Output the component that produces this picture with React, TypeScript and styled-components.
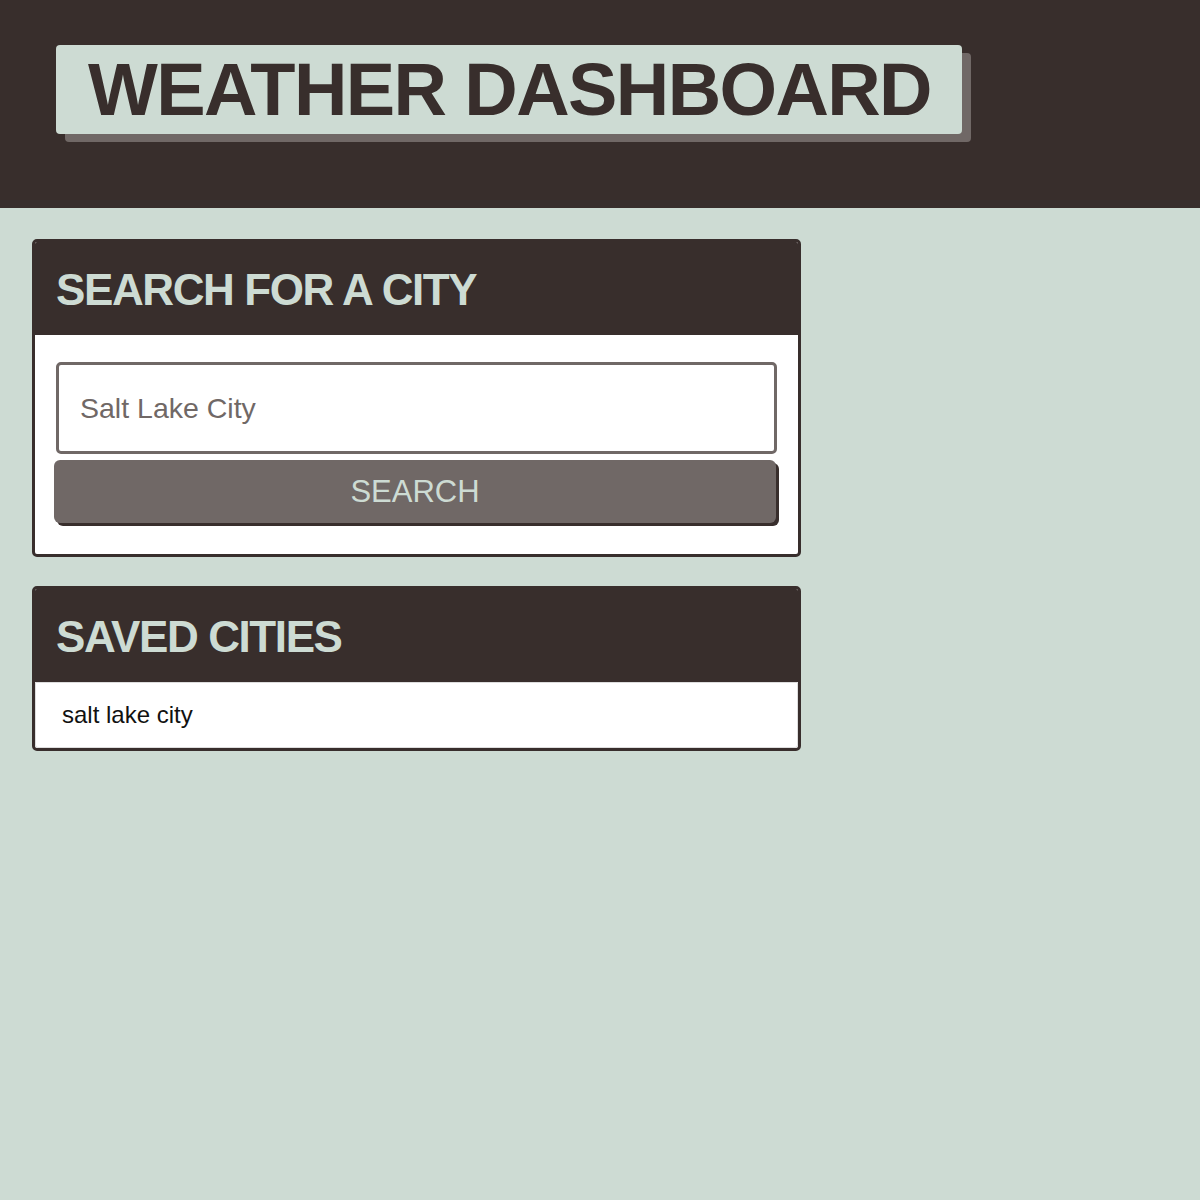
import React from "react";
import styled, { createGlobalStyle } from "styled-components";

const DARK = "#382e2c";
const LIGHT = "#cddbd3";
const MID = "#706866";

const Global = createGlobalStyle`
  html, body { margin: 0; padding: 0; background: ${LIGHT}; }
  body { font-family: "Liberation Sans", Arial, sans-serif; }
  * { box-sizing: border-box; }
`;

const Header = styled.header`
  background: ${DARK};
  height: 208px;
  padding: 45px 0 0 56px;
`;

const TitleBox = styled.h1`
  display: inline-block;
  margin: 0;
  background: ${LIGHT};
  color: ${DARK};
  border-radius: 4px;
  box-shadow: 9px 8px 0 ${MID};
  padding: 0 31px 0 32px;
  height: 89px;
  line-height: 89px;
  font-size: 74px;
  font-weight: 700;
  letter-spacing: -1.6px;
`;

const Main = styled.main`
  padding: 31px 0 0 32px;
  display: flex;
  flex-direction: column;
  gap: 29px;
`;

const Card = styled.section`
  width: 769px;
  border: 3px solid ${DARK};
  border-radius: 5px;
  background: #fff;
  overflow: hidden;
`;

const CardHeader = styled.h2`
  margin: 0;
  background: ${DARK};
  color: ${LIGHT};
  height: 93px;
  padding: 2px 0 0 21px;
  display: flex;
  align-items: center;
  font-size: 44px;
  font-weight: 700;
  letter-spacing: -1.4px;
`;

const Form = styled.div`
  padding: 27px 21px 31px 19px;
  display: flex;
  flex-direction: column;
  gap: 6px;
`;

const Input = styled.input`
  margin-left: 2px;
  height: 92px;
  border: 3px solid ${MID};
  border-radius: 5px;
  padding: 0 21px;
  font-family: "Liberation Sans", Arial, sans-serif;
  font-size: 28.5px;
  color: ${DARK};
  outline: none;
  &::placeholder { color: ${MID}; }
`;

const Button = styled.button`
  height: 63px;
  background: ${MID};
  border: none;
  border-radius: 6px;
  box-shadow: 3px 3px 0 ${DARK};
  color: ${LIGHT};
  font-family: "Liberation Sans", Arial, sans-serif;
  font-size: 31px;
  cursor: pointer;
  width: 722px;
`;

const List = styled.ul`
  margin: 0;
  padding: 0;
  list-style: none;
`;

const ListItem = styled.li`
  height: 66px;
  display: flex;
  align-items: center;
  padding-left: 26px;
  font-size: 24px;
  color: #111;
  border: 1px solid #ddd;
  border-radius: 0 0 3px 3px;
`;

export default function App() {
  return (
    <>
      <Global />
      <Header>
        <TitleBox>WEATHER DASHBOARD</TitleBox>
      </Header>
      <Main>
        <Card>
          <CardHeader>SEARCH FOR A CITY</CardHeader>
          <Form>
            <Input placeholder="Salt Lake City" />
            <Button>SEARCH</Button>
          </Form>
        </Card>
        <Card>
          <CardHeader>SAVED CITIES</CardHeader>
          <List>
            <ListItem>salt lake city</ListItem>
          </List>
        </Card>
      </Main>
    </>
  );
}
